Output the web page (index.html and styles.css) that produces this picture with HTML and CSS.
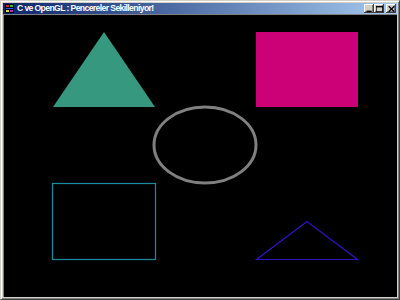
FILE: index.html
```html
<!DOCTYPE html>
<html>
<head>
<meta charset="utf-8">
<link rel="stylesheet" href="styles.css">
</head>
<body>
<div class="window">
  <div class="titlebar">
    <svg class="appicon" width="9" height="9" viewBox="0 0 9 9">
      <rect x="0" y="0" width="9" height="9" fill="#000"/>
      <rect x="1" y="1" width="3" height="2" fill="#e02020"/>
      <rect x="5" y="1" width="3" height="2" fill="#20c020"/>
      <rect x="1" y="4" width="7" height="1" fill="#3050ff"/>
      <rect x="1" y="6" width="3" height="2" fill="#e0e020"/>
      <rect x="5" y="6" width="3" height="2" fill="#c020c0"/>
    </svg>
    <span class="title">C ve OpenGL : Pencereler Sekilleniyor!</span>
    <div class="buttons">
      <div class="btn"><svg width="9" height="8" viewBox="0 0 9 8"><rect x="1" y="6" width="6" height="2" fill="#000"/></svg></div>
      <div class="btn"><svg width="9" height="8" viewBox="0 0 9 8"><rect x="0.5" y="0.5" width="8" height="7" fill="none" stroke="#000"/><rect x="0" y="0" width="9" height="2" fill="#000"/></svg></div>
      <div class="btn gap"><svg width="9" height="8" viewBox="0 0 9 8"><path d="M1 0.5 L8 7.5 M8 0.5 L1 7.5" stroke="#000" stroke-width="1.6"/></svg></div>
    </div>
  </div>
  <div class="client">
    <svg class="canvas" width="394" height="282" viewBox="0 0 394 282">
      <polygon points="100,17 49,92 151,92" fill="#36997f"/>
      <rect x="252" y="17" width="102" height="75" fill="#cc0077"/>
      <ellipse cx="201" cy="130" rx="51" ry="38" fill="none" stroke="#808080" stroke-width="3"/>
      <rect x="48.5" y="168.5" width="103" height="76" fill="none" stroke="#1a8ca3" stroke-width="1.2"/>
      <polygon points="303,206.5 252.5,244.5 353.5,244.5" fill="none" stroke="#3410c0" stroke-width="1.2"/>
    </svg>
  </div>
</div>
</body>
</html>
```
FILE: styles.css
```css
html, body {
  margin: 0;
  padding: 0;
  background: #d4d0c8;
}
.window {
  width: 400px;
  height: 300px;
  box-sizing: border-box;
  background: #d4d0c8;
  border-top: 1px solid #d4d0c8;
  border-left: 1px solid #d4d0c8;
  border-right: 1px solid #404040;
  border-bottom: 1px solid #404040;
  box-shadow: inset 1px 1px 0 #ffffff, inset -1px -1px 0 #808080;
  padding: 2px 2px 2px 2px;
  display: flex;
  flex-direction: column;
}
.titlebar {
  height: 11px;
  flex: none;
  background: linear-gradient(to right, #0a246a, #a6caf0);
  display: flex;
  align-items: center;
  padding: 0 1px 0 2px;
}
.appicon {
  flex: none;
  margin-right: 3px;
}
.title {
  color: #ffffff;
  font-family: "Liberation Sans", Arial, sans-serif;
  font-weight: bold;
  font-size: 8.6px;
  line-height: 11px;
  letter-spacing: -0.6px;
  white-space: nowrap;
}
.buttons {
  margin-left: auto;
  display: flex;
}
.btn {
  width: 10px;
  height: 9px;
  background: #d4d0c8;
  box-shadow: inset -1px -1px 0 #404040, inset 1px 1px 0 #ffffff, inset -2px -2px 0 #808080;
  display: flex;
  align-items: center;
  justify-content: center;
}
.btn svg {
  transform: scale(0.8);
}
.btn.gap {
  margin-left: 2px;
}
.client {
  flex: 1;
  background: #000000;
  border-top: 1px solid #808080;
  border-left: 1px solid #808080;
  overflow: hidden;
}
.canvas {
  display: block;
}
```
